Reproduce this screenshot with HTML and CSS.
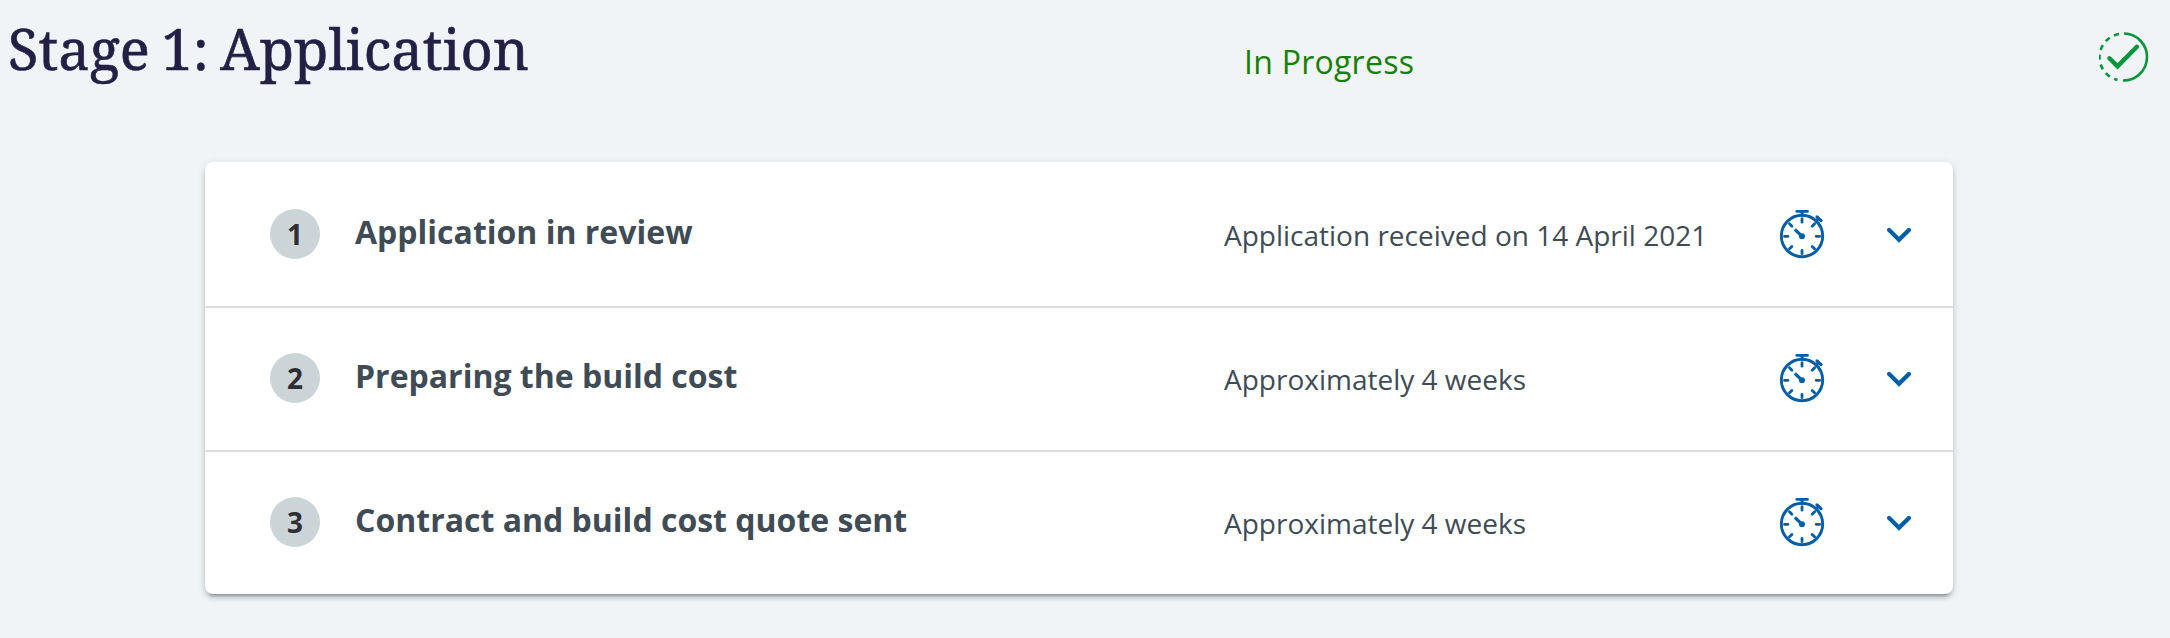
FILE: index.html
```html
<!DOCTYPE html>
<html lang="en">
<head>
<meta charset="utf-8">
<title>Stage 1: Application</title>
<link rel="stylesheet" href="styles.css">
</head>
<body>
<svg class="symbols" aria-hidden="true">
  <symbol id="stopwatch" viewBox="0 0 48 52">
    <g fill="none" stroke="currentColor" stroke-width="2.9" stroke-linecap="round">
      <circle cx="24" cy="28" r="20.7"/>
      <path d="M18.8 3.4h10.7M24.1 4v4" stroke-width="2.9"/>
      <path d="M39 9l4 3.7" stroke-width="3.2"/>
      <path d="M38 13.5l1.8-2" stroke-width="2.4"/>
      <path d="M24 10.8v3.4M24 42.3v3.4M6.4 28.3h3.6M38.2 28.3h3.6M11.5 15.8l2.4 2.4M34.2 18.2l2.4-2.4M11.5 40.8l2.4-2.4M34.2 38.4l2.4 2.4" stroke-width="2.8"/>
      <path d="M17.8 22.3l5.8 5.6" stroke-width="3.2"/>
    </g>
    <circle cx="24" cy="28.2" r="3" fill="currentColor"/>
  </symbol>
  <symbol id="chevron" viewBox="0 0 24 16">
    <path d="M2.1 3L12 12.8 21.9 3" fill="none" stroke="currentColor" stroke-width="4.2" stroke-linecap="round"/>
  </symbol>
</svg>
<header class="stage">
  <h1 class="stage-title">Stage 1: Application</h1>
  <p class="stage-status">In Progress</p>
  <svg class="stage-icon" viewBox="0 0 50 50">
    <g fill="none" stroke="currentColor" stroke-width="2.6">
      <path d="M25 1.5a23.5 23.5 0 0 1-1 47"/>
      <path d="M20 2A23.5 23.5 0 0 0 18.5 48" stroke-dasharray="5.2 4.85"/>
      <path d="M10.4 26.3l8.1 8 19.4-19.5" stroke-width="4.4" stroke-linecap="round"/>
    </g>
  </svg>
</header>
<main class="card">
  <section class="step">
    <span class="step-number">1</span>
    <h2 class="step-title">Application in review</h2>
    <p class="step-note">Application received on 14 April 2021</p>
    <svg class="step-clock"><use href="#stopwatch"/></svg>
    <svg class="step-chevron"><use href="#chevron"/></svg>
  </section>
  <section class="step">
    <span class="step-number">2</span>
    <h2 class="step-title">Preparing the build cost</h2>
    <p class="step-note">Approximately 4 weeks</p>
    <svg class="step-clock"><use href="#stopwatch"/></svg>
    <svg class="step-chevron"><use href="#chevron"/></svg>
  </section>
  <section class="step">
    <span class="step-number">3</span>
    <h2 class="step-title">Contract and build cost quote sent</h2>
    <p class="step-note">Approximately 4 weeks</p>
    <svg class="step-clock"><use href="#stopwatch"/></svg>
    <svg class="step-chevron"><use href="#chevron"/></svg>
  </section>
</main>
</body>
</html>
```
FILE: styles.css
```css
* { box-sizing: border-box; }
body {
  margin: 0;
  min-height: 638px;
  background: #f0f4f7;
  color: #3f4b55;
  font-family: "Open Sans", "Noto Sans", sans-serif;
}
h1, h2, p { margin: 0; font-weight: 400; white-space: nowrap; }
.symbols { display: block; width: 0; height: 0; }
.stage {
  display: grid;
  grid-template-columns: 1236px 852px 50px;
  height: 162px;
  padding-left: 8px;
}
.stage-title {
  padding-top: 11px;
  color: #231f45;
  font: 400 56px/74px "Roboto Slab", "Noto Serif", "DejaVu Serif", serif;
  word-spacing: -3px;
  -webkit-text-stroke: .6px #231f45;
}
.stage-status {
  padding-top: 40px;
  color: #168000;
  font-size: 32px;
  line-height: 44px;
  letter-spacing: .25px;
}
.stage-icon { width: 50px; height: 50px; margin: 32px 0 0 3px; color: #009639; }
.card {
  width: 1748px;
  margin-left: 205px;
  border-radius: 8px;
  background: #fff;
  box-shadow: 0 6px 2px -4px rgba(0, 0, 0, .2), 0 4px 4px rgba(0, 0, 0, .14), 0 2px 10px rgba(0, 0, 0, .12);
}
.step {
  display: grid;
  grid-template-columns: 85px 869px 554px 109px 24px;
  align-items: center;
  height: 144px;
  padding: 0 0 2px 65px;
  border-top: 2px solid #dedede;
}
.step:first-child { border-top-color: transparent; }
.step-number {
  width: 50px;
  height: 50px;
  border-radius: 50%;
  background: #cbd5d8;
  color: #2f2e35;
  font-size: 28px;
  font-weight: 700;
  line-height: 50px;
  text-align: center;
}
.step-title { padding-bottom: 4px; font-size: 32px; font-weight: 700; line-height: 44px; }
.step-note { padding-top: 2px; font-size: 28px; line-height: 38px; }
.step-clock { width: 48px; height: 52px; color: #005ea8; }
.step-chevron { width: 24px; height: 16px; margin-top: 2px; color: #005ea8; }
```
